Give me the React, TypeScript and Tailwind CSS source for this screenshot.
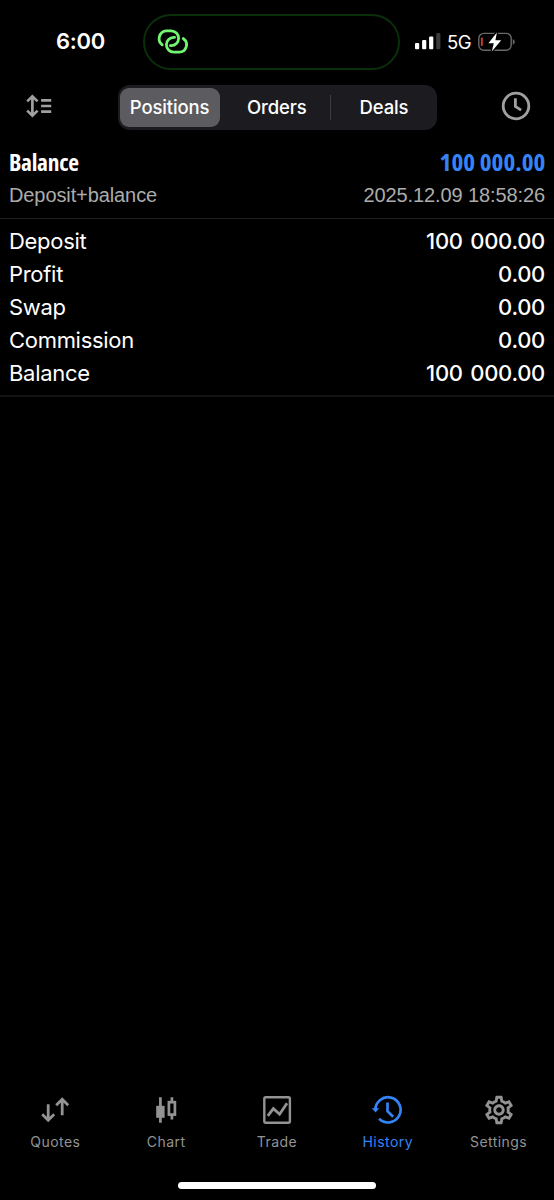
import React, { useState } from 'react';
import { MdOutlineSettings } from 'react-icons/md';

interface SummaryRow {
  label: string;
  value: string;
}

interface TabItem {
  id: string;
  icon: React.ReactNode;
}

const summary: SummaryRow[] = [
  { label: 'Deposit', value: '100 000.00' },
  { label: 'Profit', value: '0.00' },
  { label: 'Swap', value: '0.00' },
  { label: 'Commission', value: '0.00' },
  { label: 'Balance', value: '100 000.00' },
];

const QuotesIcon = () => (
  <svg width="30" height="30" viewBox="0 0 30 30" fill="none" stroke="currentColor" strokeWidth="2.8">
    <path d="M8.2 9.3V25M2.2 19.3l6 6 6-6M22.2 20.3V4.2M16.2 10.2l6-6 6 6" />
  </svg>
);

const ChartIcon = () => (
  <svg width="30" height="30" viewBox="0 0 30 30" fill="none" stroke="currentColor" strokeWidth="2.7">
    <path d="M9.4 2.2v25.6M20.9 2.2v5M20.9 20v4.6" />
    <rect x="5.2" y="10.8" width="8.4" height="12" fill="currentColor" stroke="none" />
    <rect x="17.9" y="7.2" width="6" height="12.4" />
  </svg>
);

const TradeIcon = () => (
  <svg width="30" height="30" viewBox="0 0 30 30" fill="none" stroke="currentColor" strokeWidth="2.4">
    <rect x="2.3" y="2.2" width="25.6" height="25.6" rx="1.5" />
    <path d="M5.8 20.8l5.6-7.2 6.2 5.6 7.4-11" strokeWidth="2.8" />
  </svg>
);

const HistoryIcon = () => (
  <svg width="32" height="30" viewBox="0 0 32 30" fill="none" stroke="currentColor" strokeWidth="2.7">
    <path d="M3.4 15.5a12.6 12.6 0 1 1 3.7 8.3" />
    <path d="M-.2 13.2h7.4l-3.6 4.4z" fill="currentColor" stroke="none" />
    <path d="M15.5 7.6v8.6l5.6 5.6" />
  </svg>
);

const SortIcon = () => (
  <svg width="26" height="24" viewBox="0 0 26 24" fill="none" stroke="currentColor" strokeWidth="2.7">
    <path d="M6.4 3v18M1.2 7.4l5.2-5 5.2 5M1.2 16.6l5.2 5 5.2-5" />
    <path d="M15.1 6.3h10.1M15.1 12h10.1M15.1 17.7h10.1" />
  </svg>
);

const ClockIcon = () => (
  <svg width="30" height="30" viewBox="0 0 30 30" fill="none" stroke="currentColor" strokeWidth="2.8">
    <circle cx="15" cy="15" r="12.8" />
    <path d="M14.4 7.2v8.3l5.7 3.6" />
  </svg>
);

const LinkIcon = () => (
  <svg width="32" height="26" viewBox="0 0 32 26" fill="none" stroke="#72f56f" strokeWidth="2.8" strokeLinecap="round">
    <path d="M6.2 15.8A7.8 7.8 0 0 1 9.8 1.9h5.4a7.4 7.4 0 0 1 0 14.8h-.8" />
    <path d="M18.6 8.3h-.8a7.4 7.4 0 0 0 0 14.8h5.4a7.4 7.4 0 0 0 4.1-13.5" />
  </svg>
);

const SignalIcon = () => (
  <svg width="26" height="17" viewBox="0 0 26 17" fill="#fff">
    <rect x="0" y="10" width="4.2" height="6.2" rx="1" />
    <rect x="7.1" y="7" width="4.2" height="9.2" rx="1" />
    <rect x="14.1" y="3.6" width="4.2" height="12.6" rx="1" />
    <rect x="21.2" y="0" width="4.2" height="16.2" rx="1" fill="#3a3a3c" />
  </svg>
);

const BatteryIcon = () => (
  <svg width="38" height="22" viewBox="0 0 38 22" fill="none">
    <rect x="0.8" y="2.4" width="32.4" height="16.8" rx="5" stroke="#69696b" strokeWidth="1.4" />
    <path d="M34.8 8.1q2 1 2 2.8t-2 2.8z" fill="#69696b" />
    <rect x="2.9" y="6.6" width="1.9" height="8.4" rx=".8" fill="#d33a2c" />
    <path d="M18.9 1.4L10.4 12.2h5.4L13.8 20.4l9.4-11.2h-5.8z" fill="#fff" stroke="#000" strokeWidth="2.6" />
    <path d="M18.9 1.4L10.4 12.2h5.4L13.8 20.4l9.4-11.2h-5.8z" fill="#fff" />
  </svg>
);

const tabs: TabItem[] = [
  { id: 'Quotes', icon: <QuotesIcon /> },
  { id: 'Chart', icon: <ChartIcon /> },
  { id: 'Trade', icon: <TradeIcon /> },
  { id: 'History', icon: <HistoryIcon /> },
  { id: 'Settings', icon: <MdOutlineSettings size={34} className="-my-0.5" /> },
];

const StatusBar = () => (
  <header className="flex h-[84px] shrink-0 items-start">
    <div className="mt-[27px] w-[143px] pl-14 text-[22px] leading-7 font-semibold tracking-[-0.3px]">6:00</div>
    <div className="mt-3.5 flex h-[56px] w-[257px] items-center rounded-full border-2 border-[#0b2f0a] pb-px pl-[11px]">
      <LinkIcon />
    </div>
    <div className="mt-[29px] ml-[15px] flex h-6 items-center">
      <SignalIcon />
      <span className="ml-[6px] w-[25px] pt-px text-[18.5px] leading-6 tracking-[-0.6px]">5G</span>
      <span className="ml-[5.5px] pt-0.5">
        <BatteryIcon />
      </span>
    </div>
  </header>
);

export default function App() {
  const [segment, setSegment] = useState('Positions');
  const [activeTab, setActiveTab] = useState('History');

  return (
    <div className="flex h-[1200px] w-[554px] flex-col overflow-hidden bg-black font-['Inter',sans-serif] text-white">
      <StatusBar />

      <nav className="flex h-[46px] shrink-0 items-center pt-px pl-[26px]">
        <button className="w-[91.5px] pb-[3px] text-[#a0a0a0]">
          <SortIcon />
        </button>
        <div className="flex h-[45px] w-[319px] items-center rounded-xl bg-[#1c1c20] text-[18.5px] font-medium tracking-[-0.15px]">
          {['Positions', 'Orders', 'Deals'].map((name, i) => (
            <React.Fragment key={name}>
              {i === 2 && <span className="h-[25px] w-px bg-[#3c3c41]" />}
              <button
                onClick={() => setSegment(name)}
                className={`flex h-[39px] items-center justify-center rounded-[9px] pt-px ${
                  i === 0 ? 'ml-0.5 w-[100px]' : i === 1 ? 'w-[110.5px] pl-1' : 'w-[105px] pl-px'
                } ${segment === name ? 'bg-[#5b5b60]' : ''}`}
              >
                {name}
              </button>
            </React.Fragment>
          ))}
        </div>
        <button className="ml-auto flex pr-[23px] pb-1 text-[#a0a0a0]">
          <ClockIcon />
        </button>
      </nav>

      <section className="flex h-[89px] shrink-0 flex-col border-b border-[#1d1d1d] px-[9px] pt-4">
        <div className="flex h-8 items-center justify-between pt-px font-['Open_Sans',sans-serif] text-[23.5px] font-bold [font-stretch:75%]">
          <span className="tracking-[-0.3px]">Balance</span>
          <span className="origin-right scale-x-[1.075] text-[#3484f7]">100 000.00</span>
        </div>
        <div className="flex h-[33px] items-center justify-between font-['Liberation_Sans',sans-serif] text-[20px] tracking-[-0.1px] text-[#acacac]">
          <span>Deposit+balance</span>
          <span>2025.12.09 18:58:26</span>
        </div>
      </section>

      <section className="shrink-0 border-b-2 border-[#131313] px-[9px] pt-1.5 pb-[5px]">
        {summary.map((row) => (
          <div key={row.label} className="flex h-[33px] items-center justify-between text-[22px]">
            <span className="tracking-[-0.3px]">{row.label}</span>
            <span className="font-medium tracking-[-0.3px] [word-spacing:2px]">{row.value}</span>
          </div>
        ))}
      </section>

      <main className="flex-1" />

      <footer className="h-[107px] shrink-0">
        <div className="grid grid-cols-5 pt-0.5">
          {tabs.map((tab) => (
            <button
              key={tab.id}
              onClick={() => setActiveTab(tab.id)}
              className={`flex flex-col items-center ${activeTab === tab.id ? 'text-[#3484f7]' : 'text-[#939393]'}`}
            >
              <span className="flex h-[30px] items-center">{tab.icon}</span>
              <span className="mt-[7px] text-[14px] leading-5 tracking-[0.45px]">{tab.id}</span>
            </button>
          ))}
        </div>
        <div className="mx-auto mt-[30px] h-[7px] w-[198px] rounded-full bg-white" />
      </footer>
    </div>
  );
}
